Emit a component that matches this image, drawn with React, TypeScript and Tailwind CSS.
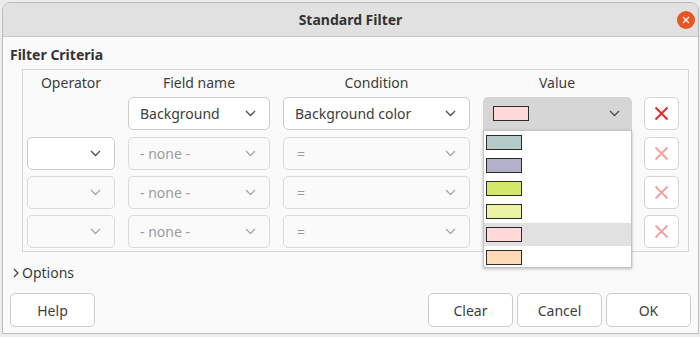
import React from "react";

const Chevron = ({ disabled }: { disabled?: boolean }) => (
  <svg width="11" height="7" viewBox="0 0 11 7" className="shrink-0">
    <path d="M1 1 L5.5 5.5 L10 1" fill="none" stroke={disabled ? "#a8a8a8" : "#4a4a4a"} strokeWidth="1.3" />
  </svg>
);

const Combo = ({
  w,
  text,
  disabled,
  children,
}: {
  w: string;
  text?: string;
  disabled?: boolean;
  children?: React.ReactNode;
}) => (
  <div
    className={`${w} h-[33px] rounded-[5px] border flex items-center justify-between pl-[11px] pr-[13px] ${
      disabled ? "border-[#dcdad8] bg-[#fafafa] text-[#9c9c9c]" : "border-[#cfcbc8] bg-white text-[#3d3d3d]"
    }`}
  >
    <span className="text-[14px] leading-[18px]">{children ?? text}</span>
    <Chevron disabled={disabled} />
  </div>
);

const DelBtn = ({ disabled }: { disabled?: boolean }) => (
  <div className="w-[35px] h-[33px] rounded-[5px] border border-[#d6d3d0] bg-white flex items-center justify-center">
    <svg width="15" height="15" viewBox="0 0 15 15">
      <path d="M1.5 1.5 L13.5 13.5 M13.5 1.5 L1.5 13.5" stroke={disabled ? "#f2a3a3" : "#e42b2b"} strokeWidth="2" />
    </svg>
  </div>
);

const Swatch = ({ color }: { color: string }) => (
  <div className="w-[36px] h-[15px] border border-[#2b2b2b]" style={{ background: color }} />
);

const colors = ["#b4cac6", "#b3b1c9", "#d3e86a", "#e9f3a3", "#ffd8d8", "#ffdab5"];

const GRID = "grid grid-cols-[88px_142px_187px_148px_35px] gap-x-[13px]";

export default function App() {
  return (
    <div
      className="w-[700px] h-[337px] bg-[#ececec] pt-[2px] pl-[2px] overflow-hidden text-[#3d3d3d]"
      style={{ fontFamily: '"Noto Sans", "Open Sans", sans-serif' }}
    >
      <div className="w-[697px] h-[332px] rounded-t-[8px] bg-[#fafafa] border border-[#bdbdbd] flex flex-col relative">
        {/* Title bar */}
        <div className="h-[34px] shrink-0 rounded-t-[7px] bg-[#e1e1e1] border-b border-[#c8c8c8] flex items-center justify-center relative">
          <span className="text-[14px] font-bold leading-[18px] text-[#333333]">Standard Filter</span>
          <div className="absolute right-[3px] top-[8px] w-[18px] h-[18px] rounded-full bg-[#e95420] flex items-center justify-center">
            <svg width="8" height="8" viewBox="0 0 8 8">
              <path d="M1 1 L7 7 M7 1 L1 7" stroke="white" strokeWidth="1.4" />
            </svg>
          </div>
        </div>

        {/* Body */}
        <div className="flex flex-col flex-1">
          <div className="mt-[9px] pl-[7px] text-[14px] font-bold leading-[18px] text-[#333333]">Filter Criteria</div>

          <div className="mt-[5px] ml-[19px] w-[667px] border border-[#d6d6d6] pt-[4px] pl-[4px] pb-[3px] flex flex-col">
            {/* Header */}
            <div className={`${GRID} text-[14px] leading-[18px] text-[#3d3d3d]`}>
              <div className="text-center">Operator</div>
              <div className="text-center">Field name</div>
              <div className="text-center">Condition</div>
              <div className="text-center">Value</div>
              <div />
            </div>

            {/* Row 1 */}
            <div className={`mt-[5px] ${GRID}`}>
              <div />
              <Combo w="w-[142px]" text="Background" />
              <Combo w="w-[187px]" text="Background color" />
              <div className="relative">
                <div className="w-[149px] h-[33px] rounded-t-[5px] bg-[#d6d6d6] flex items-center justify-between pl-[10px] pr-[12px]">
                  <Swatch color="#ffd8d8" />
                  <Chevron />
                </div>
                <div className="absolute left-0 top-[33px] z-10 w-[149px] h-[138px] bg-white border border-[#c4c4c4] shadow-[0_1px_3px_rgba(0,0,0,0.25)] flex flex-col">
                  {colors.map((c, i) => (
                    <div
                      key={c}
                      className={`h-[23px] shrink-0 flex items-center pl-[2px] ${i === 4 ? "bg-[#e1e1e1]" : ""}`}
                    >
                      <Swatch color={c} />
                    </div>
                  ))}
                </div>
              </div>
              <DelBtn />
            </div>

            {[0, 1, 2].map((r) => (
              <div key={r} className={`${r === 0 ? "mt-[7px]" : "mt-[6px]"} ${GRID}`}>
                <Combo w="w-[88px]" text="" disabled={r > 0} />
                <Combo w="w-[142px]" text="- none -" disabled />
                <Combo w="w-[187px]" disabled>
                  <span className="pl-[2px]">=</span>
                </Combo>
                <div />
                <DelBtn disabled />
              </div>
            ))}
          </div>

          {/* Options */}
          <div className="mt-[12px] pl-[10px] flex items-center gap-[3px] text-[14px] leading-[18px]">
            <svg width="6" height="10" viewBox="0 0 6 10">
              <path d="M1 1 L5 5 L1 9" fill="none" stroke="#3d3d3d" strokeWidth="1.2" />
            </svg>
            <span>Options</span>
          </div>

          {/* Buttons */}
          <div className="mt-[11px] pl-[7px] pr-[7px] flex items-center">
            <button className="w-[85px] h-[34px] rounded-[5px] border border-[#cfcbc8] bg-white text-[14px]">Help</button>
            <div className="flex-1" />
            <div className="flex gap-[4px]">
              <button className="w-[85px] h-[34px] rounded-[5px] border border-[#cfcbc8] bg-white text-[14px]">Clear</button>
              <button className="w-[85px] h-[34px] rounded-[5px] border border-[#cfcbc8] bg-white text-[14px]">Cancel</button>
              <button className="w-[85px] h-[34px] rounded-[5px] border border-[#cfcbc8] bg-white text-[14px]">OK</button>
            </div>
          </div>
        </div>
      </div>
    </div>
  );
}
